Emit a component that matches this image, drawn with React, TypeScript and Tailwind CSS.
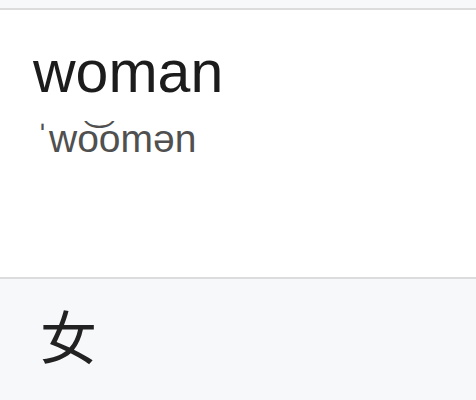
export default function App() {
  return (
    <div className="min-h-[400px] w-full bg-[#f7f8fa] pt-2 font-['Liberation_Sans',Arial,sans-serif]">
      <div className="h-[271px] border-y-2 border-[#dcdcdc] bg-white pl-[33px] pt-[33px]">
        <div className="text-[59px] leading-[59px] text-[#1c1c1c]">woman</div>
        <div className="mt-[17px] pl-[3px] text-[39px] leading-[39px] text-[#505050]">
          ˈwo͝omən
        </div>
      </div>
      <div className="pl-[40px] pt-[27px]">
        <div className="font-['Noto_Sans_CJK_SC',sans-serif] text-[57px] leading-[57px] text-[#222222]">
          女
        </div>
      </div>
    </div>
  )
}
